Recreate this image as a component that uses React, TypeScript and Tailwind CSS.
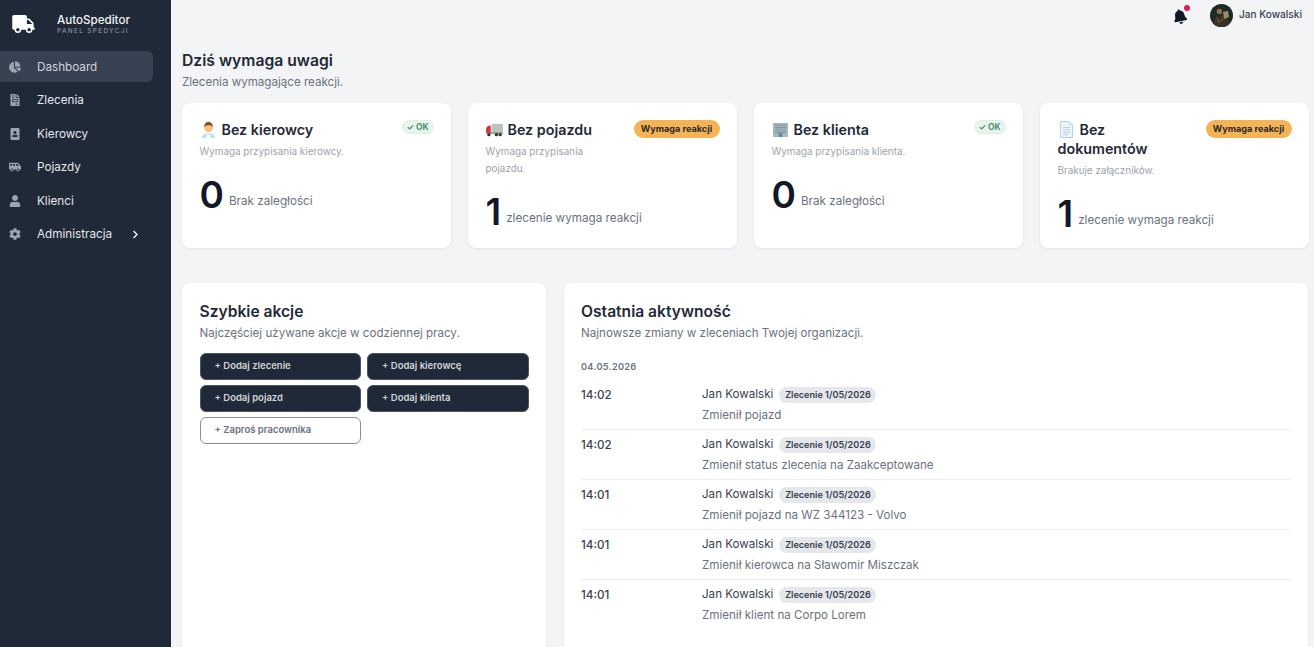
import React from "react";
import { FaTruck, FaChartPie, FaFileInvoice, FaPortrait, FaShuttleVan, FaUser, FaCog, FaChevronRight, FaBell } from "react-icons/fa";

const nav = [
  { label: "Dashboard", Icon: FaChartPie, active: true },
  { label: "Zlecenia", Icon: FaFileInvoice },
  { label: "Kierowcy", Icon: FaPortrait },
  { label: "Pojazdy", Icon: FaShuttleVan },
  { label: "Klienci", Icon: FaUser },
  { label: "Administracja", Icon: FaCog, chevron: true },
];

function Driver() {
  return (
    <svg viewBox="0 0 18 18" className="w-[17px] h-[17px] shrink-0">
      <path d="M2 18c0-3.500 3-5 7-5s7 1.500 7 5z" fill="#bfe0f5" />
      <path d="M7 13l2 2 2-2 0 5H7z" fill="#fff" />
      <circle cx="9" cy="7.500" r="4.500" fill="#f7c27d" />
      <path d="M4.500 7c-.5-4 2-6 4.500-6s5 2 4.500 6c-1-2-2-2.500-4.500-2.500S5.500 5 4.500 7z" fill="#8a4b1e" />
    </svg>
  );
}
function Lorry() {
  return (
    <svg viewBox="0 0 18 16" className="w-[17px] h-[15px] shrink-0">
      <rect x="6" y="2" width="12" height="9" fill="#b9c4bb" />
      <path d="M0 7l2-3h3v8H0z" fill="#d9303a" />
      <rect x="0" y="11" width="18" height="1.500" fill="#7d8580" />
      <circle cx="3" cy="13.500" r="1.800" fill="#333" />
      <circle cx="11" cy="13.500" r="1.800" fill="#333" />
      <circle cx="15" cy="13.500" r="1.800" fill="#333" />
    </svg>
  );
}
function Office() {
  return (
    <svg viewBox="0 0 18 18" className="w-[17px] h-[17px] shrink-0">
      <rect x="1" y="2" width="16" height="15" fill="#a9b8bd" />
      <path d="M3 4.500h12M3 7h12M3 9.500h12M3 12h12" stroke="#7f949c" strokeWidth="1.200" />
      <rect x="7" y="13" width="4" height="4" fill="#5e8ca3" />
    </svg>
  );
}
function Doc() {
  return (
    <svg viewBox="0 0 18 18" className="w-[17px] h-[17px] shrink-0">
      <path d="M2.500 .5h9l4 4v13h-13z" fill="#eef6fc" stroke="#9fd0ef" />
      <path d="M11.500 .5v4h4z" fill="#c6e3f6" />
      <path d="M5 7h8M5 9.500h8M5 12h8M5 14.500h6" stroke="#c2c9cf" strokeWidth="1" />
    </svg>
  );
}
function Avatar() {
  return (
    <svg viewBox="0 0 23 23" className="w-[23px] h-[23px] shrink-0 rounded-full mr-[6px]">
      <rect width="23" height="23" fill="#1c2a26" />
      <path d="M2 23c0-5 2-10 7-11l5 0c4 1 6 6 6 11z" fill="#3a3226" />
      <circle cx="9.500" cy="7.500" r="2.800" fill="#8a6f50" />
      <path d="M13 8l5-1 1 6-5 2z" fill="#a08a68" />
      <path d="M6 12l3 5 5-3-1 2-5 3z" fill="#70583e" />
    </svg>
  );
}

function OkBadge() {
  return (
    <span className="shrink-0 rounded-full bg-[#e8f5ee] border border-[#dcefe4] text-[#4f9270] text-[8.500px] font-bold h-[14px] w-[32px] flex items-center justify-center">
      ✓ OK
    </span>
  );
}
function WarnBadge() {
  return (
    <span className="shrink-0 rounded-full bg-[#f4b455] text-[#2a2a2a] text-[9.100px] font-bold h-[18px] w-[86px] flex items-center justify-center">
      Wymaga reakcji
    </span>
  );
}

function Card({ title, desc, n, note, warn, descW }: { title: React.ReactNode; desc: string; n: string; note: string; warn?: boolean; descW?: string }) {
  return (
    <div className="h-[145px] bg-white rounded-lg shadow-[0_1px_3px_rgba(0,0,0,0.08)] pt-[17px] pl-[17.500px] pr-[17.500px]">
      <div className="flex items-start justify-between gap-2">
        <div className="text-[14.300px] leading-[19px] font-semibold text-[#1f2937]">{title}</div>
        {warn ? <WarnBadge /> : <OkBadge />}
      </div>
      <div className={`text-[9.900px] leading-[17px] text-[#9ca3af] mt-[4px] ${descW ?? ""}`}>{desc}</div>
      <div className="flex items-end mt-[14px]">
        <span className="text-[37px] leading-[42px] font-semibold text-[#111827] mr-[5px]">{n}</span>
        <span className="text-[11.700px] leading-[18px] text-[#6b7280] mb-[6px]">{note}</span>
      </div>
    </div>
  );
}

function Btn({ label, outline }: { label: string; outline?: boolean }) {
  return (
    <button className={`h-[27px] rounded-md pl-[14px] text-left text-[9.500px] font-semibold border ${outline ? "bg-white border-[#8b9096] text-[#6b7280]" : "bg-[#1f2937] border-[#4b5563] text-[#d1d5db]"}`}>
      {label}
    </button>
  );
}

const rows = [
  ["14:02", "Zmienił pojazd"],
  ["14:02", "Zmienił status zlecenia na Zaakceptowane"],
  ["14:01", "Zmienił pojazd na WZ 344123 - Volvo"],
  ["14:01", "Zmienił kierowca na Sławomir Miszczak"],
  ["14:01", "Zmienił klient na Corpo Lorem"],
];

export default function App() {
  return (
    <div className="h-screen flex overflow-hidden bg-[#f3f4f6] font-['Inter',sans-serif]">
      <aside className="w-[171px] shrink-0 bg-[#1f2937] text-white">
        <div className="h-[51px] flex items-center pl-[12px]">
          <FaTruck className="w-[23px] h-[18px] text-white mt-[-4px]" />
          <div className="ml-[22px] mt-[-2px]">
            <div className="text-[11.600px] leading-[14px] font-medium text-[#f3f4f6]">AutoSpeditor</div>
            <div className="text-[6.500px] leading-[9px] tracking-[1.300px] text-[#9ca3af]">PANEL SPEDYCJI</div>
          </div>
        </div>
        <nav className="flex flex-col">
          {nav.map(({ label, Icon, active, chevron }) => (
            <div key={label} className={`h-[31px] w-[153px] mb-[2.550px] flex items-center rounded-r-md ${active ? "bg-[#374151]" : ""}`}>
              <span className="w-[37px] pl-[9px]">
                <Icon className="w-[12px] h-[12px] text-[#9ca3af]" />
              </span>
              <span className={`text-[11.700px] pt-[2px] ${active ? "text-[#d1d5db]" : "text-[#e5e7eb]"}`}>{label}</span>
              {chevron && <FaChevronRight className="w-[9px] h-[9px] ml-[19px] text-[#f3f4f6]" />}
            </div>
          ))}
        </nav>
      </aside>
      <main className="flex-1 min-w-0 pl-[11px] pr-[5px]">
        <header className="h-[28px] flex items-center justify-end pr-[7px] pt-[2px]">
          <span className="relative mr-[23px] mt-[2px]">
            <FaBell className="w-[14px] h-[15px] text-[#111827] -rotate-12" />
            <span className="absolute right-[-3px] top-[-4px] w-[6px] h-[6px] rounded-full bg-[#e11d48]" />
          </span>
          <Avatar />
          <span className="text-[10.100px] font-medium text-[#374151]">Jan Kowalski</span>
        </header>
        <h1 className="mt-[22px] text-[15.700px] leading-[22px] font-semibold text-[#1f2937]">Dziś wymaga uwagi</h1>
        <p className="text-[11.600px] leading-[20px] text-[#6b7280]">Zlecenia wymagające reakcji.</p>
        <div className="grid grid-cols-4 gap-[17px] mt-[11px]">
          <Card title={<span className="flex items-center gap-[5px]"><Driver />Bez kierowcy</span>} desc="Wymaga przypisania kierowcy." n="0" note="Brak zaległości" />
          <Card warn descW="max-w-[130px]" title={<span className="flex items-center gap-[5px]"><Lorry />Bez pojazdu</span>} desc="Wymaga przypisania pojazdu." n="1" note="zlecenie wymaga reakcji" />
          <Card title={<span className="flex items-center gap-[5px]"><Office />Bez klienta</span>} desc="Wymaga przypisania klienta." n="0" note="Brak zaległości" />
          <Card warn title={<><span className="flex items-center gap-[5px]"><Doc />Bez</span>dokumentów</>} desc="Brakuje załączników." n="1" note="zlecenie wymaga reakcji" />
        </div>
        <div className="flex gap-[18px] mt-[35px] pr-[1px]">
          <section className="w-[364px] shrink-0 h-[400px] bg-white rounded-lg shadow-[0_1px_3px_rgba(0,0,0,0.08)] pt-[18px] px-[17.500px]">
            <h2 className="text-[15.600px] leading-[22px] font-semibold text-[#1f2937]">Szybkie akcje</h2>
            <p className="text-[11.600px] leading-[18px] text-[#6b7280] mt-[1px]">Najczęściej używane akcje w codziennej pracy.</p>
            <div className="grid grid-cols-2 gap-x-[6px] gap-y-[5px] mt-[11px]">
              <Btn label="+ Dodaj zlecenie" />
              <Btn label="+ Dodaj kierowcę" />
              <Btn label="+ Dodaj pojazd" />
              <Btn label="+ Dodaj klienta" />
              <Btn label="+ Zaproś pracownika" outline />
            </div>
          </section>
          <section className="flex-1 min-w-0 h-[400px] bg-white rounded-lg shadow-[0_1px_3px_rgba(0,0,0,0.08)] pt-[18px] px-[17px]">
            <h2 className="text-[15.600px] leading-[22px] font-semibold text-[#1f2937]">Ostatnia aktywność</h2>
            <p className="text-[11.600px] leading-[18px] text-[#6b7280] mt-[1px]">Najnowsze zmiany w zleceniach Twojej organizacji.</p>
            <div className="text-[9.200px] leading-[14px] font-semibold text-[#6b7280] tracking-[0.300px] mt-[18px]">04.05.2026</div>
            <div className="mt-[6px]">
              {rows.map(([t, msg], i) => (
                <div key={i} className={`flex h-[50px] pt-[5px] ${i < rows.length - 1 ? "border-b border-[#eceef1]" : ""}`}>
                  <span className="w-[121px] shrink-0 text-[11.600px] leading-[20px] font-medium text-[#374151]">{t}</span>
                  <div>
                    <div className="flex items-center h-[20px]">
                      <span className="text-[11.600px] text-[#374151]">Jan Kowalski</span>
                      <span className="ml-[6px] h-[16px] w-[97px] rounded-full bg-[#e5e7eb] text-[#374151] text-[9.100px] font-semibold flex items-center justify-center">Zlecenie 1/05/2026</span>
                    </div>
                    <div className="text-[11.600px] leading-[20px] text-[#6b7280]">{msg}</div>
                  </div>
                </div>
              ))}
            </div>
          </section>
        </div>
      </main>
    </div>
  );
}
